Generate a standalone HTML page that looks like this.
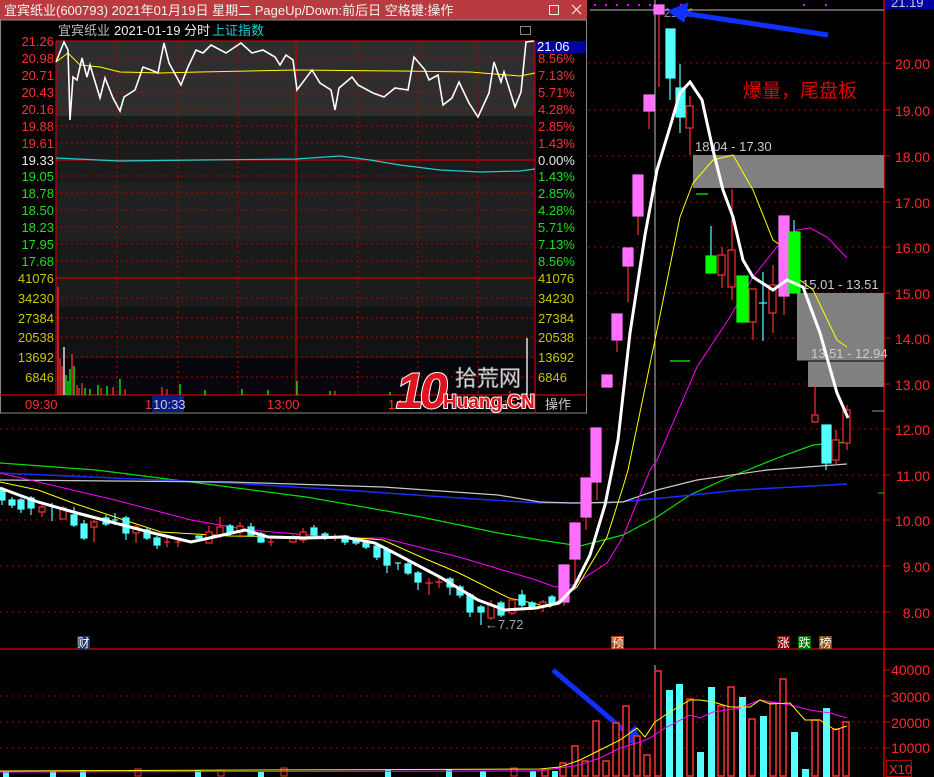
<!DOCTYPE html>
<html><head><meta charset="utf-8"><style>
html,body{margin:0;padding:0;background:#000;width:934px;height:777px;overflow:hidden}
svg{display:block}
text{font-family:"Liberation Sans","Noto Sans CJK SC",sans-serif}
</style></head><body>
<svg width="934" height="777" viewBox="0 0 934 777" xmlns="http://www.w3.org/2000/svg">
<rect width="934" height="777" fill="#000"/>
<!-- price grid dotted -->
<g stroke="#a00" stroke-width="1" stroke-dasharray="2,4">
<line x1="0" y1="63" x2="884" y2="63"/><line x1="0" y1="110" x2="884" y2="110"/><line x1="0" y1="156" x2="884" y2="156"/><line x1="0" y1="202" x2="884" y2="202"/><line x1="0" y1="247" x2="884" y2="247"/><line x1="0" y1="293" x2="884" y2="293"/><line x1="0" y1="338" x2="884" y2="338"/><line x1="0" y1="384" x2="884" y2="384"/><line x1="0" y1="429" x2="884" y2="429"/><line x1="0" y1="475" x2="884" y2="475"/><line x1="0" y1="520" x2="884" y2="520"/><line x1="0" y1="566" x2="884" y2="566"/><line x1="0" y1="612" x2="884" y2="612"/>
<line x1="0" y1="696" x2="884" y2="696"/><line x1="0" y1="722" x2="884" y2="722"/><line x1="0" y1="748" x2="884" y2="748"/>
</g>
<line x1="0" y1="649" x2="934" y2="649" stroke="#b00" stroke-width="1.5"/>
<line x1="884" y1="0" x2="884" y2="777" stroke="#c00" stroke-width="1.5"/>
<line x1="590" y1="10" x2="884" y2="10" stroke="#bbb"/>
<line x1="655" y1="0" x2="655" y2="649" stroke="#bbb"/>
<line x1="655" y1="665" x2="655" y2="777" stroke="#bbb"/>
<g fill="#f0f"><rect x="594" y="4" width="2" height="2"/><rect x="605" y="4" width="2" height="2"/><rect x="616" y="4" width="2" height="2"/><rect x="627" y="4" width="2" height="2"/><rect x="638" y="4" width="2" height="2"/><rect x="649" y="4" width="2" height="2"/><rect x="680" y="4" width="2" height="2"/><rect x="803" y="4" width="2" height="2"/><rect x="825" y="4" width="2" height="2"/></g>
<!-- gray boxes -->
<rect x="693" y="155" width="191" height="33" fill="#808080"/>
<rect x="797" y="293" width="87" height="68" fill="#808080"/>
<rect x="808" y="361" width="76" height="26" fill="#808080"/>
<line x1="797" y1="361" x2="884" y2="361" stroke="#000"/>
<g font-size="13" fill="#ccc"><text x="695" y="151">18.04 - 17.30</text><text x="802" y="289">15.01 - 13.51</text><text x="811" y="358">13.51 - 12.94</text></g>
<!-- MA lines -->
<g fill="none">
<polyline stroke="#00e000" stroke-width="1.2" points="0,463 96,470 191,482 306,497 421,517 498,533 540,540 580,546 623,535 657,517 690,495 723,480 740,473 780,457 813,445 847,442"/>
<polyline stroke="#1a2cff" stroke-width="1.5" points="0,473 115,478 230,483 344,490 459,498 540,503 607,503 673,497 740,490 847,484"/>
<polyline stroke="#c8c8c8" stroke-width="1.2" points="0,480 230,482 383,487 498,495 540,502 573,503 623,502 657,490 697,480 767,470 847,464"/>
<polyline stroke="#ff00ff" stroke-width="1" points="0,473 115,500 191,520 249,530 344,538 383,538 459,557 536,580 555,587 573,585 607,563 623,537 650,470 657,460 697,367 730,317 753,277 777,247 797,230 810,228 827,237 847,258"/>
<polyline stroke="#ffff00" stroke-width="1" points="0,482 38,490 73,503 115,517 161,532 230,536 344,537 383,540 421,557 459,573 509,598 550,607 577,587 607,537 623,487 628,470 655,340 680,217 693,183 713,160 733,155 753,190 773,240 783,247 800,280 813,290 837,340 847,347"/>
</g>
<!-- candles -->
<g stroke-width="1.2">
<g stroke="#54ffff" fill="#54ffff">
<line x1="2" y1="488" x2="2" y2="505"/><rect x="-1" y="490" width="6" height="10"/>
<line x1="12" y1="497" x2="12" y2="508"/><rect x="9" y="500" width="6" height="5"/>
<line x1="21" y1="498" x2="21" y2="513"/><rect x="18" y="500" width="6" height="9"/>
<line x1="31" y1="496" x2="31" y2="515"/><rect x="28" y="498" width="6" height="10"/>
<line x1="52" y1="503" x2="52" y2="521"/>
<line x1="74" y1="507" x2="74" y2="527"/><rect x="71" y="515" width="6" height="10"/>
<line x1="84" y1="520" x2="84" y2="540"/><rect x="81" y="524" width="6" height="14"/>
<line x1="106" y1="515" x2="106" y2="526"/><rect x="103" y="518" width="6" height="6"/>
<line x1="115" y1="513" x2="115" y2="525"/><line x1="112" y1="520" x2="118" y2="520"/>
<line x1="126" y1="516" x2="126" y2="540"/><rect x="123" y="518" width="6" height="15"/>
<line x1="147" y1="528" x2="147" y2="540"/><rect x="144" y="530" width="6" height="8"/>
<line x1="157" y1="536" x2="157" y2="549"/><rect x="154" y="538" width="6" height="7"/>
<rect x="196" y="536" width="6" height="2"/>
<line x1="230" y1="524" x2="230" y2="536"/><rect x="227" y="526" width="6" height="6"/>
<line x1="251" y1="523" x2="251" y2="537"/><rect x="248" y="527" width="6" height="8"/>
<line x1="261" y1="532" x2="261" y2="543"/><rect x="258" y="534" width="6" height="8"/>
<line x1="314" y1="525" x2="314" y2="538"/><rect x="311" y="528" width="6" height="7"/>
<line x1="325" y1="532" x2="325" y2="540"/><rect x="322" y="534" width="6" height="4"/>
<line x1="345" y1="535" x2="345" y2="545"/><rect x="342" y="536" width="6" height="6"/>
<line x1="356" y1="538" x2="356" y2="545"/><rect x="353" y="540" width="6" height="3"/>
<line x1="366" y1="541" x2="366" y2="549"/><rect x="363" y="543" width="6" height="4"/>
<line x1="377" y1="543" x2="377" y2="560"/><rect x="374" y="546" width="6" height="11"/>
<line x1="387" y1="547" x2="387" y2="573"/><rect x="384" y="550" width="6" height="15"/>
<line x1="398" y1="563" x2="398" y2="570"/><line x1="395" y1="563" x2="401" y2="563"/>
<line x1="408" y1="562" x2="408" y2="575"/><rect x="405" y="564" width="6" height="9"/>
<line x1="418" y1="571" x2="418" y2="590"/><rect x="415" y="573" width="6" height="9"/>
<line x1="450" y1="577" x2="450" y2="595"/><rect x="447" y="579" width="6" height="8"/>
<line x1="460" y1="585" x2="460" y2="598"/><rect x="457" y="587" width="6" height="8"/>
<line x1="470" y1="593" x2="470" y2="617"/><rect x="467" y="595" width="6" height="17"/>
<line x1="481" y1="605" x2="481" y2="625"/><rect x="478" y="607" width="6" height="5"/>
<line x1="501" y1="601" x2="501" y2="617"/><rect x="498" y="603" width="6" height="12"/>
<line x1="522" y1="590" x2="522" y2="607"/><rect x="519" y="595" width="6" height="10"/>
<line x1="532" y1="601" x2="532" y2="610"/><rect x="529" y="603" width="6" height="4"/>
<line x1="552" y1="595" x2="552" y2="605"/><rect x="549" y="597" width="6" height="6"/>
<line x1="670" y1="29" x2="670" y2="100"/><rect x="666" y="29" width="9" height="49"/>
<line x1="680" y1="64" x2="680" y2="133"/><rect x="676" y="88" width="9" height="29"/>
<line x1="711" y1="226" x2="711" y2="256"/>
<line x1="763" y1="272" x2="763" y2="341"/><line x1="759" y1="303" x2="767" y2="303"/>
<line x1="826" y1="425" x2="826" y2="470"/><rect x="822" y="425" width="9" height="38"/>
<line x1="794" y1="220" x2="794" y2="232"/>
</g>
<g stroke="#ff3030" fill="#000">
<line x1="42" y1="505" x2="42" y2="517"/><rect x="39" y="507" width="6" height="5"/>
<line x1="63" y1="506" x2="63" y2="519"/><rect x="60" y="508" width="6" height="11"/>
<line x1="94" y1="520" x2="94" y2="542"/><rect x="91" y="522" width="6" height="5"/>
<line x1="136" y1="525" x2="136" y2="543"/><rect x="133" y="527" width="6" height="6"/>
<line x1="167" y1="537" x2="167" y2="547"/><line x1="164" y1="542" x2="170" y2="542"/>
<line x1="178" y1="537" x2="178" y2="547"/><line x1="175" y1="542" x2="181" y2="542"/>
<line x1="209" y1="526" x2="209" y2="543"/><rect x="206" y="532" width="6" height="11"/>
<line x1="220" y1="517" x2="220" y2="538"/><rect x="217" y="527" width="6" height="8"/>
<line x1="240" y1="522" x2="240" y2="538"/><rect x="237" y="526" width="6" height="6"/>
<line x1="271" y1="538" x2="271" y2="546"/><line x1="268" y1="542" x2="274" y2="542"/>
<line x1="293" y1="535" x2="293" y2="543"/><rect x="290" y="537" width="6" height="5"/>
<line x1="303" y1="528" x2="303" y2="543"/><rect x="300" y="532" width="6" height="8"/>
<line x1="335" y1="534" x2="335" y2="541"/><line x1="332" y1="538" x2="338" y2="538"/>
<line x1="429" y1="578" x2="429" y2="595"/><line x1="425" y1="583" x2="433" y2="583"/>
<line x1="439" y1="578" x2="439" y2="588"/><line x1="435" y1="582" x2="443" y2="582"/>
<line x1="491" y1="600" x2="491" y2="620"/><rect x="488" y="605" width="6" height="13"/>
<line x1="512" y1="598" x2="512" y2="615"/><rect x="509" y="600" width="6" height="13"/>
<line x1="543" y1="600" x2="543" y2="612"/><rect x="540" y="602" width="6" height="5"/>
<line x1="564" y1="602" x2="564" y2="606"/><line x1="575" y1="559" x2="575" y2="590"/><line x1="586" y1="517" x2="586" y2="530"/><line x1="597" y1="482" x2="597" y2="500"/>
<line x1="617" y1="340" x2="617" y2="352"/><line x1="628" y1="266" x2="628" y2="302"/><line x1="638" y1="216" x2="638" y2="235"/><line x1="649" y1="111" x2="649" y2="129"/><line x1="659" y1="11" x2="659" y2="87"/>
<line x1="690" y1="96" x2="690" y2="155"/><rect x="686" y="106" width="7" height="22"/>
<line x1="722" y1="247" x2="722" y2="288"/><rect x="718" y="255" width="7" height="20"/>
<line x1="732" y1="189" x2="732" y2="300"/><rect x="728" y="250" width="7" height="37"/>
<line x1="753" y1="289" x2="753" y2="340"/><rect x="749" y="289" width="7" height="33"/>
<line x1="773" y1="265" x2="773" y2="333"/><rect x="769" y="285" width="7" height="28"/>
<line x1="784" y1="296" x2="784" y2="315"/>
<line x1="815" y1="386" x2="815" y2="422"/><rect x="812" y="415" width="6" height="7"/>
<line x1="836" y1="430" x2="836" y2="465"/><rect x="832" y="440" width="7" height="20"/>
<line x1="847" y1="405" x2="847" y2="450"/><rect x="843" y="410" width="7" height="33"/>
</g>
<g fill="#ff70ff" stroke="#ff70ff">
<rect x="559" y="565" width="10" height="37"/><rect x="570" y="523" width="10" height="36"/><rect x="581" y="478" width="10" height="39"/><rect x="591" y="428" width="10" height="54"/><rect x="602" y="375" width="10" height="12"/><rect x="612" y="314" width="10" height="26"/><rect x="623" y="248" width="10" height="18"/><rect x="633" y="175" width="10" height="41"/><rect x="644" y="95" width="10" height="16"/><rect x="654" y="5" width="10" height="9"/><rect x="779" y="216" width="10" height="80"/>
</g>
<g fill="#00ff00" stroke="#00ff00">
<rect x="706" y="256" width="10" height="17"/><rect x="737" y="276" width="11" height="46"/><rect x="789" y="232" width="11" height="61"/>
<line x1="696" y1="194" x2="708" y2="194"/><line x1="670" y1="361" x2="690" y2="361"/>
</g>
</g>
<!-- white MA5 -->
<polyline fill="none" stroke="#fff" stroke-width="3" points="0,488 38,502 77,513 115,523 153,533 191,542 214,537 245,530 268,537 306,538 344,537 375,543 402,557 440,577 478,600 505,610 536,608 559,603 574,587 590,555 605,505 618,440 630,333 645,235 657,170 670,127 680,93 690,82 702,100 713,150 723,190 733,217 743,260 753,277 773,290 787,280 803,287 820,333 837,393 848,418"/>
<text x="485" y="629" font-size="13" fill="#9ab">←7.72</text>
<text x="664" y="17" font-size="12" fill="#999">21.26</text>
<text x="743" y="97" font-size="19" fill="#e00000">爆量，尾盘板</text>
<!-- arrows -->
<g fill="#1030ff" stroke="#1030ff">
<line x1="828" y1="35" x2="682" y2="13" stroke-width="5"/>
<polygon points="668,11 688,3 684,22"/>
<line x1="553" y1="670" x2="632" y2="737" stroke-width="5"/>
<polygon points="642,746 622,740 635,726"/>
</g>
<!-- badges -->
<g font-size="12" fill="#fff">
<rect x="77" y="636" width="13" height="13" fill="#1a3560"/><text x="77.5" y="647">财</text>
<rect x="611" y="636" width="13" height="13" fill="#b04010"/><text x="611.5" y="647">预</text>
<rect x="777" y="636" width="13" height="13" fill="#800000"/><text x="777.5" y="647">涨</text>
<rect x="798" y="636" width="13" height="13" fill="#007000"/><text x="798.5" y="647">跌</text>
<rect x="819" y="636" width="13" height="13" fill="#8a4a10"/><text x="819.5" y="647">榜</text>
</g>
<!-- volume bars -->
<g stroke="#ff3030" stroke-width="1.5" fill="#000">
<rect x="542" y="770" width="6" height="6"/><rect x="560" y="763" width="6" height="13"/><rect x="572" y="746" width="6" height="30"/><rect x="582" y="761" width="6" height="15"/><rect x="593" y="721" width="6" height="55"/><rect x="603" y="761" width="6" height="15"/><rect x="613" y="723" width="6" height="53"/><rect x="623" y="706" width="6" height="70"/><rect x="634" y="736" width="6" height="40"/><rect x="644" y="755" width="6" height="21"/><rect x="655" y="671" width="6" height="105"/><rect x="687" y="699" width="6" height="77"/><rect x="718" y="706" width="6" height="70"/><rect x="728" y="687" width="6" height="89"/><rect x="749" y="719" width="6" height="57"/><rect x="770" y="703" width="6" height="73"/><rect x="780" y="679" width="6" height="97"/><rect x="812" y="720" width="6" height="56"/><rect x="833" y="729" width="6" height="47"/><rect x="843" y="722" width="6" height="54"/>
</g>
<g fill="#54ffff">
<rect x="552" y="771" width="6" height="6"/><rect x="666" y="690" width="7" height="87"/><rect x="676" y="684" width="7" height="93"/><rect x="697" y="752" width="7" height="25"/><rect x="708" y="687" width="7" height="90"/><rect x="739" y="697" width="7" height="80"/><rect x="760" y="716" width="7" height="61"/><rect x="791" y="732" width="7" height="45"/><rect x="802" y="769" width="7" height="8"/><rect x="823" y="708" width="7" height="69"/>
</g>
<g fill="#54ffff"><rect x="3" y="771" width="6" height="6"/><rect x="50" y="771" width="6" height="6"/><rect x="80" y="770" width="6" height="7"/><rect x="195" y="770" width="6" height="7"/><rect x="258" y="771" width="6" height="6"/><rect x="385" y="770" width="6" height="7"/><rect x="446" y="769" width="6" height="8"/><rect x="480" y="771" width="6" height="6"/><rect x="530" y="771" width="6" height="6"/></g>
<g stroke="#ff3030" fill="none"><rect x="135" y="769" width="6" height="7"/><rect x="281" y="768" width="6" height="8"/><rect x="218" y="770" width="6" height="6"/><rect x="511" y="768" width="6" height="8"/></g>
<polyline fill="none" stroke="#ff00ff" stroke-width="1" points="0,772 540,771 580,765 600,758 620,748 640,742 650,738 665,728 690,715 700,718 713,712 740,708 760,700 790,705 810,710 830,713 847,718"/>
<polyline fill="none" stroke="#ffff00" stroke-width="1" points="0,771 540,769 560,767 580,760 600,750 620,740 637,728 645,737 655,722 670,712 690,700 700,700 713,702 730,707 750,707 760,700 770,704 790,703 805,720 820,720 835,730 847,726"/>
<!-- right axis labels -->
<rect x="885" y="0" width="49" height="9" fill="#0000a0"/>
<text x="891" y="7" font-size="13" fill="#ccc">21.19</text>
<g font-size="14" fill="#ff2a2a" text-anchor="end">
<text x="930" y="69">20.00</text><text x="930" y="116">19.00</text><text x="930" y="162">18.00</text><text x="930" y="208">17.00</text><text x="930" y="253">16.00</text><text x="930" y="299">15.00</text><text x="930" y="344">14.00</text><text x="930" y="390">13.00</text><text x="930" y="435">12.00</text><text x="930" y="481">11.00</text><text x="930" y="526">10.00</text><text x="930" y="572">9.00</text><text x="930" y="618">8.00</text>
<text x="930" y="675">40000</text><text x="930" y="702">30000</text><text x="930" y="728">20000</text><text x="930" y="753">10000</text>
</g>
<g stroke="#c00"><line x1="884" y1="63" x2="890" y2="63"/><line x1="884" y1="110" x2="890" y2="110"/><line x1="884" y1="156" x2="890" y2="156"/><line x1="884" y1="202" x2="890" y2="202"/><line x1="884" y1="247" x2="890" y2="247"/><line x1="884" y1="293" x2="890" y2="293"/><line x1="884" y1="338" x2="890" y2="338"/><line x1="884" y1="384" x2="890" y2="384"/><line x1="884" y1="429" x2="890" y2="429"/><line x1="884" y1="475" x2="890" y2="475"/><line x1="884" y1="520" x2="890" y2="520"/><line x1="884" y1="566" x2="890" y2="566"/><line x1="884" y1="612" x2="890" y2="612"/><line x1="884" y1="670" x2="890" y2="670"/><line x1="884" y1="696" x2="890" y2="696"/><line x1="884" y1="722" x2="890" y2="722"/><line x1="884" y1="748" x2="890" y2="748"/></g>
<rect x="886.5" y="760.5" width="25" height="16" fill="none" stroke="#a00"/>
<text x="889" y="774" font-size="13" fill="#ff2a2a">X10</text>
<line x1="872" y1="411" x2="884" y2="411" stroke="#999"/>
<line x1="878" y1="493" x2="884" y2="493" stroke="#0c0"/>

<!-- popup window -->
<rect x="0" y="0" width="587" height="414" fill="#000"/>
<rect x="0" y="0" width="587" height="20" fill="#b93b3f"/>
<text x="4" y="15" font-size="13" fill="#f2f2f2">宜宾纸业(600793) 2021年01月19日 星期二 PageUp/Down:前后日 空格键:操作</text>
<rect x="549.5" y="5.5" width="9" height="9" fill="none" stroke="#eee"/>
<path d="M572 5 L581 14 M581 5 L572 14" stroke="#eee" stroke-width="1.2"/>
<rect x="0.5" y="20" width="586" height="393" fill="none" stroke="#888"/>
<!-- chart stripes -->
<rect x="56" y="41" width="479" height="75" fill="#2e2e2e"/>
<rect x="56" y="116" width="479" height="66" fill="#1b1b1b"/>
<rect x="56" y="182" width="479" height="59" fill="#202020"/>
<rect x="56" y="241" width="479" height="37" fill="#1a1a1a"/>
<rect x="56" y="278" width="479" height="29" fill="#1c1c1c"/>
<rect x="56" y="307" width="479" height="51" fill="#131313"/>
<rect x="56" y="358" width="479" height="37" fill="#06060c"/>
<g stroke="#b00" stroke-dasharray="2,3">
<line x1="56" y1="58" x2="535" y2="58"/><line x1="56" y1="75" x2="535" y2="75"/><line x1="56" y1="92" x2="535" y2="92"/><line x1="56" y1="109" x2="535" y2="109"/><line x1="56" y1="126" x2="535" y2="126"/><line x1="56" y1="143" x2="535" y2="143"/><line x1="56" y1="176" x2="535" y2="176"/><line x1="56" y1="193" x2="535" y2="193"/><line x1="56" y1="210" x2="535" y2="210"/><line x1="56" y1="227" x2="535" y2="227"/><line x1="56" y1="244" x2="535" y2="244"/><line x1="56" y1="261" x2="535" y2="261"/><line x1="56" y1="298" x2="535" y2="298"/><line x1="56" y1="318" x2="535" y2="318"/><line x1="56" y1="337" x2="535" y2="337"/><line x1="56" y1="357" x2="535" y2="357"/><line x1="56" y1="377" x2="535" y2="377"/>
<line x1="117" y1="41" x2="117" y2="395"/><line x1="178" y1="41" x2="178" y2="395"/><line x1="238" y1="41" x2="238" y2="395"/><line x1="358" y1="41" x2="358" y2="395"/><line x1="418" y1="41" x2="418" y2="395"/><line x1="478" y1="41" x2="478" y2="395"/>
</g>
<g stroke="#c00" stroke-width="1.2">
<line x1="56" y1="41" x2="535" y2="41"/><line x1="56" y1="160" x2="535" y2="160"/><line x1="56" y1="278" x2="535" y2="278"/><line x1="0" y1="395" x2="587" y2="395"/>
<line x1="56" y1="41" x2="56" y2="395"/><line x1="535" y1="41" x2="535" y2="413"/><line x1="296" y1="41" x2="296" y2="395"/>
</g>
<polyline fill="none" stroke="#2cc" stroke-width="1.2" points="56,158 120,161 200,160 296,159 340,156 370,160 400,165 440,170 480,172 520,171 535,169"/>
<polyline fill="none" stroke="#ff0" stroke-width="1" points="56,62 68,53 80,65 100,67 120,72 160,73 200,72 296,70 400,71 470,72 520,76 535,73"/>
<polyline fill="none" stroke="#fff" stroke-width="1.6" points="56,62 64,42 68,50 70,120 73,77 77,80 82,58 87,77 90,65 100,98 105,78 113,98 120,111 124,97 135,90 143,67 151,70 158,73 164,43 169,63 181,85 188,67 196,50 203,53 211,45 226,53 241,43 252,53 263,50 275,57 280,65 286,55 293,60 297,90 312,70 320,83 331,90 335,110 339,88 352,77 358,85 373,93 384,97 395,88 408,90 414,57 425,70 429,80 438,75 443,105 452,98 459,82 469,103 478,117 489,93 494,62 501,82 504,72 515,107 521,92 526,42 534,41"/>
<!-- intraday volume -->
<g stroke-width="1.3">
<g stroke="#ff3030"><line x1="58" y1="287" x2="58" y2="395"/><line x1="60" y1="358" x2="60" y2="395"/><line x1="62" y1="366" x2="62" y2="395"/><line x1="72" y1="354" x2="72" y2="395"/><line x1="77" y1="385" x2="77" y2="395"/><line x1="79" y1="388" x2="79" y2="395"/><line x1="82" y1="383" x2="82" y2="395"/><line x1="101" y1="388" x2="101" y2="395"/><line x1="113" y1="387" x2="113" y2="395"/><line x1="125" y1="389" x2="125" y2="395"/><line x1="162" y1="387" x2="162" y2="395"/><line x1="167" y1="389" x2="167" y2="395"/><line x1="335" y1="391" x2="335" y2="395"/><line x1="510" y1="391" x2="510" y2="395"/></g>
<g stroke="#fff"><line x1="64" y1="347" x2="64" y2="395"/><line x1="527" y1="338" x2="527" y2="395"/></g>
<g stroke="#0f0"><line x1="66" y1="375" x2="66" y2="395"/><line x1="68" y1="381" x2="68" y2="395"/><line x1="70" y1="369" x2="70" y2="395"/><line x1="74" y1="366" x2="74" y2="395"/><line x1="85" y1="388" x2="85" y2="395"/><line x1="90" y1="389" x2="90" y2="395"/><line x1="98" y1="385" x2="98" y2="395"/><line x1="107" y1="386" x2="107" y2="395"/><line x1="120" y1="379" x2="120" y2="395"/><line x1="180" y1="384" x2="180" y2="395"/><line x1="205" y1="390" x2="205" y2="395"/><line x1="242" y1="389" x2="242" y2="395"/><line x1="268" y1="390" x2="268" y2="395"/><line x1="297" y1="381" x2="297" y2="395"/><line x1="330" y1="391" x2="330" y2="395"/><line x1="390" y1="392" x2="390" y2="395"/></g>
</g>
<!-- left labels -->
<g font-size="13" text-anchor="end">
<g fill="#ff3030"><text x="54" y="46">21.26</text><text x="54" y="63">20.98</text><text x="54" y="80">20.71</text><text x="54" y="97">20.43</text><text x="54" y="114">20.16</text><text x="54" y="131">19.88</text><text x="54" y="148">19.61</text></g>
<text x="54" y="165" fill="#e8e8e8">19.33</text>
<g fill="#20e020"><text x="54" y="181">19.05</text><text x="54" y="198">18.78</text><text x="54" y="215">18.50</text><text x="54" y="232">18.23</text><text x="54" y="249">17.95</text><text x="54" y="266">17.68</text></g>
<g fill="#c8c800"><text x="54" y="283">41076</text><text x="54" y="303">34230</text><text x="54" y="323">27384</text><text x="54" y="342">20538</text><text x="54" y="362">13692</text><text x="54" y="382">6846</text></g>
</g>
<g font-size="13">
<rect x="536" y="41" width="50" height="12" fill="#0000a0"/>
<text x="537" y="51" fill="#fff">21.06</text>
<g fill="#ff3030"><text x="538" y="63">8.56%</text><text x="538" y="80">7.13%</text><text x="538" y="97">5.71%</text><text x="538" y="114">4.28%</text><text x="538" y="131">2.85%</text><text x="538" y="148">1.43%</text></g>
<text x="538" y="165" fill="#e8e8e8">0.00%</text>
<g fill="#20e020"><text x="538" y="181">1.43%</text><text x="538" y="198">2.85%</text><text x="538" y="215">4.28%</text><text x="538" y="232">5.71%</text><text x="538" y="249">7.13%</text><text x="538" y="266">8.56%</text></g>
<g fill="#c8c800"><text x="538" y="283">41076</text><text x="538" y="303">34230</text><text x="538" y="323">27384</text><text x="538" y="342">20538</text><text x="538" y="362">13692</text><text x="538" y="382">6846</text></g>
<text x="58" y="35" fill="#bbb">宜宾纸业</text>
<text x="114" y="35" fill="#eee">2021-01-19 分时</text>
<text x="212" y="35" fill="#2cc">上证指数</text>
<rect x="520.5" y="26.5" width="10" height="8" fill="none" stroke="#888"/>
<text x="25" y="409" fill="#ff3030">09:30</text>
<text x="145" y="409" fill="#ff3030">1</text>
<rect x="152" y="396" width="32" height="16" fill="#0a1a8a"/>
<text x="153" y="409" fill="#ccc">10:33</text>
<text x="267" y="409" fill="#ff3030">13:00</text>
<text x="388" y="409" fill="#ff3030">14:</text>
<text x="502" y="409" fill="#ff3030">15:00</text>
<text x="545" y="409" fill="#ccc">操作</text>
</g>
<!-- watermark -->
<text x="396" y="408" font-size="50" font-weight="bold" font-style="italic" fill="#e0141e" stroke="#fff" stroke-width="2" letter-spacing="-4" paint-order="stroke">10</text>
<text x="455" y="386" font-size="22" fill="#fff" stroke="#777" stroke-width="0.8">拾荒网</text>
<text x="443" y="408" font-size="19" font-weight="bold" fill="#e0141e" stroke="#fff" stroke-width="2" paint-order="stroke">Huang.CN</text>
</svg>
</body></html>
